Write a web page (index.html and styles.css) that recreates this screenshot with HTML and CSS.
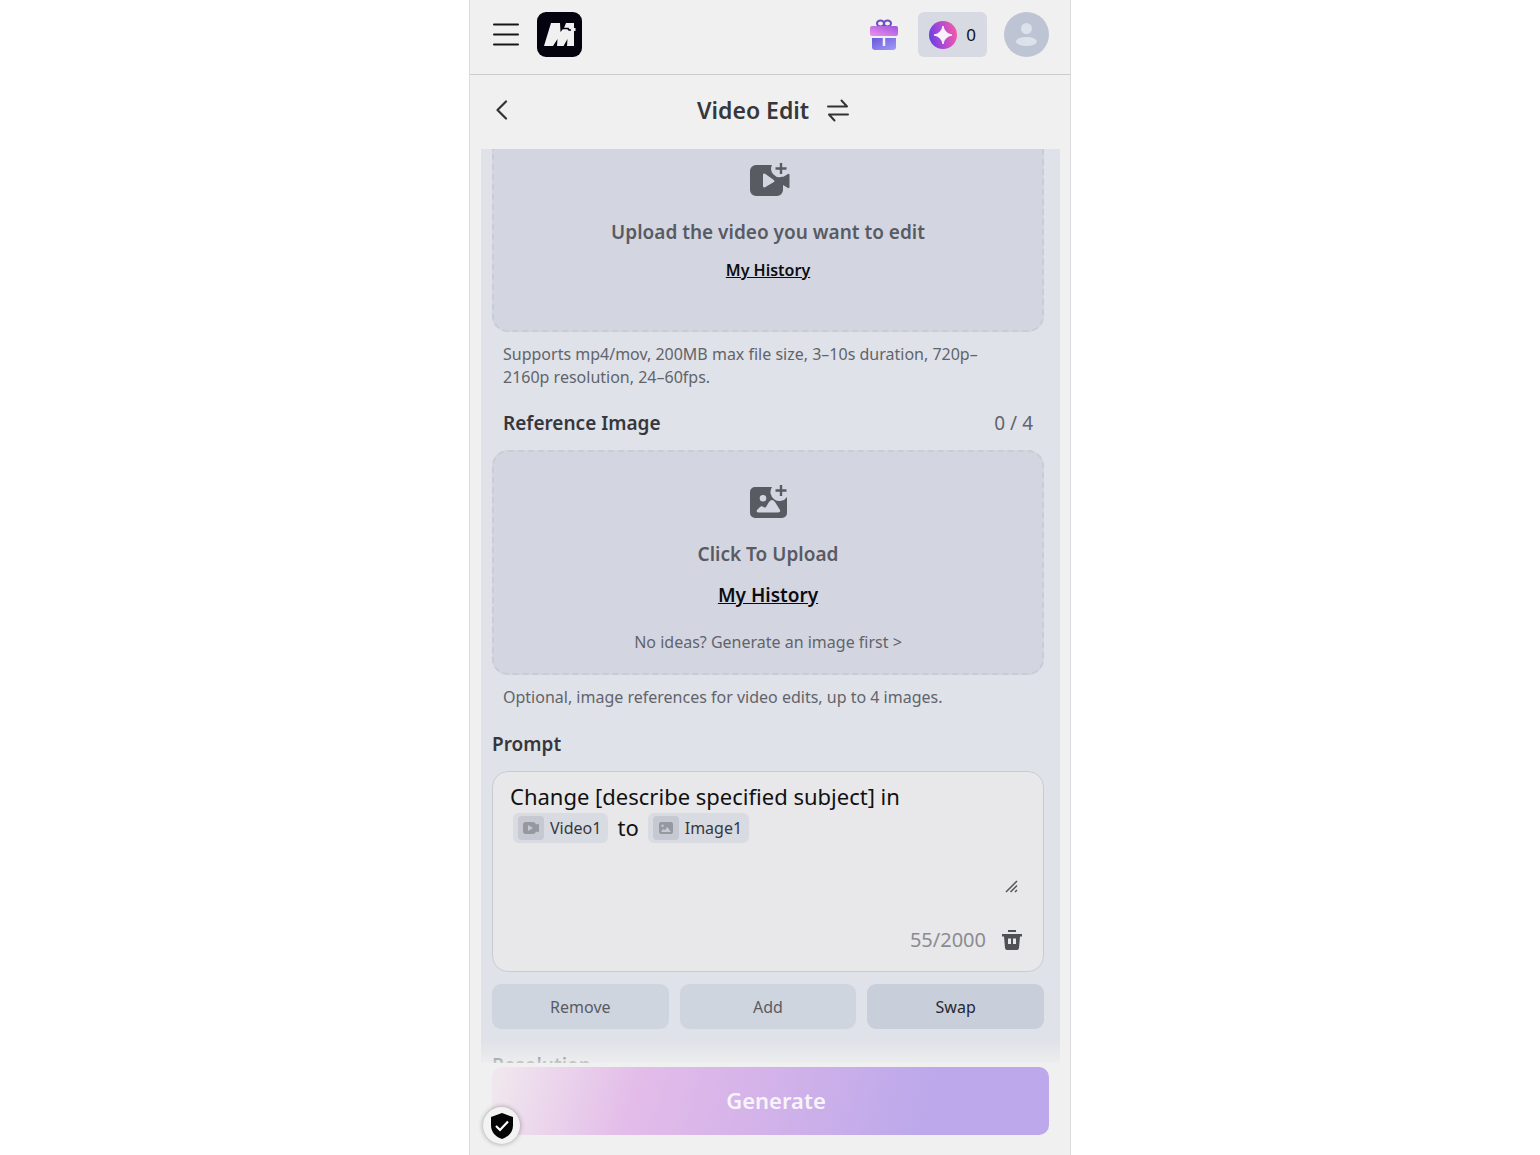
FILE: index.html
```html
<!DOCTYPE html>
<html lang="en">

<head>
    <meta charset="UTF-8">
    <meta name="viewport" content="width=device-width, initial-scale=1.0">
    <title>Video Edit</title>
    <link rel="stylesheet" href="styles.css">
</head>

<body>
    <!-- shared icons -->
    <svg class="sprite" aria-hidden="true">
        <symbol id="icon-video" viewBox="-4 0 46 34">
            <path fill="currentColor" fill-rule="evenodd" d="M7 2h16a8.500 8.500 0 0 0 11 11.500V14l5-3q1.500-.6 1.500 1v12q0 1.500-1.500 1l-5-3v5a6 6 0 0 1-6 6H7a6 6 0 0 1-6-6V8a6 6 0 0 1 6-6zm7 10v11q0 2 2 1.300l8.500-5q1.800-1.300 0-2.600L16 10.700q-2-.7-2 1.300z" />
            <path fill="none" stroke="currentColor" stroke-width="2.400" d="M32 0v11M26.500 5.500h11" />
        </symbol>
        <symbol id="icon-image" viewBox="-4 0 46 34">
            <path fill="currentColor" fill-rule="evenodd" d="M6 2h17a8.500 8.500 0 0 0 15 10v16a5 5 0 0 1-5 5H6a5 5 0 0 1-5-5V7a5 5 0 0 1 5-5zm8 8a3.300 3.300 0 1 0 0 6.600 3.300 3.300 0 0 0 0-6.600zM10 27.500h19q3 0 2-2.500l-5-8q-3-4-6 0l-3 5q-1 1-2.500 0-2.500-2-4.500 1l-2 2q-1.300 2.500 2 2.500z" />
            <path fill="none" stroke="currentColor" stroke-width="2.400" d="M32 0v11M26.500 5.500h11" />
        </symbol>
        <symbol id="icon-video-small" viewBox="0 0 16 12">
            <path fill="currentColor" fill-rule="evenodd" d="M3 0h7a3 3 0 0 1 3 2.500l2-.8q1 0 1 1v6.600q0 1-1 1l-2-.8A3 3 0 0 1 10 12H3a3 3 0 0 1-3-3V3a3 3 0 0 1 3-3zm2 3v6l5-3z" />
        </symbol>
        <symbol id="icon-image-small" viewBox="0 0 16 12">
            <path fill="currentColor" fill-rule="evenodd" d="M3 0h10a2 2 0 0 1 2 2v8a2 2 0 0 1-2 2H3a2 2 0 0 1-2-2V2a2 2 0 0 1 2-2zm1.500 2.500a1.200 1.200 0 1 0 0 2.400 1.200 1.200 0 0 0 0-2.400zM3 10h10L9.300 5 7 8 5 7z" />
        </symbol>
    </svg>

    <div class="app">
        <header class="topbar">
            <button class="icon-button" aria-label="Menu">
                <svg width="26" height="26" viewBox="0 0 26 26">
                    <path d="M1 2.500h24M1 12.500h24M1 22.500h24" fill="none" stroke="#161616" stroke-width="2" stroke-linecap="round" />
                </svg>
            </button>
            <a class="logo" href="#" aria-label="Home">
                <svg width="45" height="45" viewBox="0 0 45 45">
                    <rect width="45" height="45" rx="9" fill="#05020f" />
                    <path fill="#f0f0f0" d="M14 11h9l.5 9L26 17h5v-1h-4l2-5h8v5h1.500v3H37v15h-7l.5-7-4 7h-6.500l.5-7-4.500 7H7z" />
                    <path fill="#05020f" d="M26 15.800h5.500l1 1.500H34v1.500h-2.500l-1-1.500H26z" />
                </svg>
            </a>
            <div class="account">
                <button class="icon-button" aria-label="Rewards">
                    <svg width="32" height="32" viewBox="0 0 32 32">
                        <defs>
                            <linearGradient id="lid" x1="0" y1="1" x2="1" y2="0">
                                <stop offset="0" stop-color="#ee91ed" />
                                <stop offset="1" stop-color="#9d55dc" />
                            </linearGradient>
                            <linearGradient id="box" x1="0" y1="0" x2="1" y2="1">
                                <stop offset="0" stop-color="#6759db" />
                                <stop offset="1" stop-color="#a49cf6" />
                            </linearGradient>
                        </defs>
                        <g fill="none" stroke="#6b4fc4" stroke-width="2">
                            <ellipse cx="11.500" cy="4.500" rx="3.500" ry="3" />
                            <ellipse cx="18.500" cy="4.500" rx="3.500" ry="3" />
                        </g>
                        <rect x="1" y="7" width="28" height="10" rx="2" fill="url(#lid)" />
                        <path fill="url(#box)" d="M3 19h24v9a3 3 0 0 1-3 3H6a3 3 0 0 1-3-3z" />
                        <path d="M15 19v8" stroke="#f0effa" stroke-width="2.500" />
                    </svg>
                </button>
                <button class="credits">
                    <svg width="28" height="28" viewBox="0 0 28 28">
                        <defs>
                            <linearGradient id="coin" x1="0" y1=".6" x2="1" y2=".4">
                                <stop offset="0" stop-color="#6841e3" />
                                <stop offset=".5" stop-color="#b74bd0" />
                                <stop offset="1" stop-color="#f35aa5" />
                            </linearGradient>
                        </defs>
                        <circle cx="14" cy="14" r="14" fill="url(#coin)" />
                        <path fill="#f8f3fb" d="M14 5q1.500 7.500 9 9-7.500 1.500-9 9-1.500-7.500-9-9 7.500-1.500 9-9z" stroke="#f8f3fb" stroke-linejoin="round" />
                    </svg>
                    <span>0</span>
                </button>
                <button class="icon-button" aria-label="Profile">
                    <svg width="45" height="45" viewBox="0 0 45 45">
                        <circle cx="22.500" cy="22.500" r="22.500" fill="#bdc4d3" />
                        <circle cx="22.500" cy="16.500" r="5.500" fill="#dce2e9" />
                        <ellipse cx="22.500" cy="29.500" rx="10.500" ry="4.500" fill="#dce2e9" />
                    </svg>
                </button>
            </div>
        </header>

        <div class="titlebar">
            <button class="icon-button" aria-label="Back">
                <svg width="20" height="20" viewBox="0 0 20 20">
                    <path d="M14 1.500L5.500 10l8.500 8.500" fill="none" stroke="#333" stroke-width="2.200" stroke-linecap="round" stroke-linejoin="round" />
                </svg>
            </button>
            <h1>Video Edit</h1>
            <button class="icon-button" aria-label="Switch tool">
                <svg width="24" height="24" viewBox="0 0 24 24">
                    <path d="M2 8.500h19l-5.500-6M22 16.500H3l5.500 6" fill="none" stroke="#333" stroke-width="2" stroke-linecap="round" stroke-linejoin="round" />
                </svg>
            </button>
        </div>

        <main class="panel">
            <section class="dropzone dropzone-video">
                <svg class="dropzone-icon"><use href="#icon-video" /></svg>
                <p class="dropzone-title">Upload the video you want to edit</p>
                <a class="history history-small" href="#">My History</a>
            </section>
            <p class="hint">Supports mp4/mov, 200MB max file size, 3–10s duration, 720p–2160p resolution, 24–60fps.</p>

            <div class="section-head">
                <h2>Reference Image</h2>
                <span class="count">0 / 4</span>
            </div>
            <section class="dropzone dropzone-image">
                <svg class="dropzone-icon"><use href="#icon-image" /></svg>
                <p class="dropzone-title">Click To Upload</p>
                <a class="history" href="#">My History</a>
                <a class="ideas" href="#">No ideas? Generate an image first &gt;</a>
            </section>
            <p class="hint">Optional, image references for video edits, up to 4 images.</p>

            <h2 class="prompt-label" id="prompt-label">Prompt</h2>
            <div class="prompt-box">
                <div class="prompt-text" contenteditable="true" role="textbox" aria-multiline="true" aria-labelledby="prompt-label" spellcheck="false">Change [describe specified subject] in <br><span class="chip" contenteditable="false"><span class="chip-icon"><svg width="16" height="12"><use href="#icon-video-small" /></svg></span>Video1</span>to<span class="chip" contenteditable="false"><span class="chip-icon"><svg width="16" height="12"><use href="#icon-image-small" /></svg></span>Image1</span></div>
                <svg class="resize" width="14" height="14" viewBox="0 0 14 14">
                    <path d="M1 13L12 2M5.500 13L12 6.500M10 13l2-2" fill="none" stroke="#555" stroke-width="1.500" />
                </svg>
                <div class="prompt-foot">
                    <span>55/2000</span>
                    <button class="icon-button" aria-label="Clear prompt">
                        <svg width="20" height="20" viewBox="0 0 20 20">
                            <path fill="#505155" fill-rule="evenodd" d="M6 0h8v2H6zM0 4h20v2.500h-2L17 18q-.3 2-2 2H5q-1.700 0-2-2L2 6.500H0zm6 4.500v5.500h3V8.500zm5 0v5.500h3V8.500z" />
                        </svg>
                    </button>
                </div>
            </div>

            <div class="modes">
                <button class="mode">Remove</button>
                <button class="mode">Add</button>
                <button class="mode selected">Swap</button>
            </div>
            <h2 class="resolution">Resolution</h2>
        </main>

        <footer class="actions">
            <button class="generate">Generate</button>
            <button class="privacy" aria-label="Privacy settings">
                <svg width="22" height="26" viewBox="0 0 22 26">
                    <path fill="#050505" d="M11 0l11 4v8.500C22 19 17.500 24 11 26 4.500 24 0 19 0 12.500V4z" />
                    <path d="M5 13l4 4 8-8.500" fill="none" stroke="#fff" stroke-width="2.200" />
                </svg>
            </button>
        </footer>
    </div>
</body>

</html>
```
FILE: styles.css
```css
* {
    box-sizing: border-box;
}

body {
    margin: 0;
    background-color: #fff;
    font-family: "Noto Sans", sans-serif;
    color: #36373c;
}

h1,
h2,
p {
    margin: 0;
}

svg {
    display: block;
}

button {
    font-family: inherit;
    border: none;
    cursor: pointer;
}

.sprite {
    display: none;
}

.app {
    display: flex;
    flex-direction: column;
    width: 100%;
    max-width: 602px;
    height: 100vh;
    margin: 0 auto;
    overflow: hidden;
    background-color: #f0f0f0;
    border: solid #dcdcde;
    border-width: 0 1px;
}

.icon-button {
    padding: 0;
    background: none;
}

/* header */
.topbar {
    display: flex;
    align-items: center;
    height: 75px;
    padding: 0 21px 5px 23px;
    border-bottom: 1px solid #cbcbcf;
}

.logo {
    margin-left: 18px;
}

.account {
    display: flex;
    align-items: center;
    gap: 17px;
    margin-left: auto;
}

.credits {
    display: flex;
    align-items: center;
    gap: 9px;
    height: 45px;
    padding: 0 11px;
    background-color: #d7dae3;
    border-radius: 6px;
    font-size: 17px;
    color: #111;
}

.titlebar {
    display: flex;
    flex-shrink: 0;
    align-items: center;
    height: 74px;
    padding: 0 22px 4px;
    gap: 17px;
}

.titlebar h1 {
    margin-left: 168px;
    font-size: 23px;
    line-height: 30px;
    font-weight: 600;
}

.panel {
    flex: 1;
    min-height: 0;
    margin: 0 10px 0 11px;
    padding: 0 16px 0 11px;
    overflow: hidden;
    background-color: #dfe2e8;
}

h2 {
    font-size: 19px;
    line-height: 28px;
    font-weight: 600;
}

.dropzone {
    display: flex;
    flex-direction: column;
    align-items: center;
    background-color: #d3d6e0;
    border: 2px dashed #c9ccd5;
    border-radius: 16px;
    color: #595b63;
}

.dropzone-video {
    padding: 14px 0 48px;
    border-top: none;
    border-radius: 0 0 16px 16px;
}

.dropzone-image {
    padding: 33px 0 19px;
}

.dropzone-icon {
    width: 46px;
    height: 34px;
}

.dropzone-title {
    margin-top: 21px;
    font-size: 19px;
    line-height: 28px;
    font-weight: 600;
}

.history {
    margin-top: 13px;
    font-size: 19px;
    line-height: 28px;
    font-weight: 600;
    color: #0c0c10;
}

.history-small {
    margin-top: 12px;
    font-size: 16px;
    line-height: 24px;
}

.ideas {
    margin-top: 21px;
    font-size: 16px;
    line-height: 24px;
    color: #62646b;
    text-decoration: none;
}

.hint {
    margin: 11px 32px 0 11px;
    font-size: 16px;
    line-height: 23px;
    color: #62646b;
}

.section-head {
    display: flex;
    justify-content: space-between;
    margin: 20px 11px 13px;
}

.count {
    font-size: 19px;
    line-height: 28px;
    color: #62646b;
}

.prompt-label {
    margin: 21px 0 13px;
}

.prompt-box {
    display: flex;
    flex-direction: column;
    padding: 9px 21px 16px 17px;
    background-color: #e8e8ea;
    border: 1px solid #c9cbd0;
    border-radius: 16px;
}

.prompt-text {
    min-height: 98px;
    font-size: 22px;
    line-height: 31px;
    color: #111;
    outline: none;
}

.chip {
    display: inline-flex;
    align-items: center;
    gap: 6px;
    height: 30px;
    margin: 0 9px 0 3px;
    padding: 0 7px 0 5px;
    vertical-align: bottom;
    background-color: #d9dbe3;
    border-radius: 6px;
    font-size: 16px;
    line-height: 30px;
    color: #36373c;
}

.chip + .chip {
    margin: 0 0 0 9px;
}

.chip-icon {
    display: flex;
    align-items: center;
    justify-content: center;
    width: 26px;
    height: 24px;
    background-color: #c6c9d2;
    border-radius: 4px;
    color: #96989f;
}

.resize {
    align-self: flex-end;
    margin-right: 3px;
}

.prompt-foot {
    display: flex;
    align-items: center;
    justify-content: flex-end;
    gap: 16px;
    margin-top: 32px;
    font-size: 20px;
    line-height: 30px;
    color: #8b8c91;
}

.modes {
    display: flex;
    gap: 11px;
    margin-top: 12px;
}

.mode {
    flex: 1;
    height: 45px;
    background-color: #cfd5df;
    border-radius: 9px;
    font-size: 16px;
    color: #595b63;
}

.mode.selected {
    background-color: #c9cedb;
    color: #25272d;
}

.resolution {
    margin-top: 22px;
}

/* bottom bar */
.actions {
    position: relative;
    padding: 4px 21px 20px 22px;
    background-color: #f0f0f0;
}

/* fades the form out above the bar */
.actions::before {
    content: "";
    position: absolute;
    left: 0;
    right: 0;
    bottom: 100%;
    height: 22px;
    background: linear-gradient(rgba(240, 240, 240, 0), rgba(240, 240, 240, 0.8));
}

.generate {
    display: block;
    width: 100%;
    height: 68px;
    padding: 0 0 3px 11px;
    background: linear-gradient(105deg, #f0e6ee 2%, #e3bce9 26%, #d6b4e9 45%, #bca8eb 78%);
    border-radius: 10px;
    font-size: 22px;
    font-weight: 600;
    color: #f7f3fb;
}

.privacy {
    position: absolute;
    left: 13px;
    bottom: 11px;
    display: flex;
    align-items: center;
    justify-content: center;
    width: 37px;
    height: 37px;
    padding: 0;
    background-color: #f3f3f3;
    border-radius: 50%;
    box-shadow: 0 0 5px rgba(0, 0, 0, 0.35);
}
```
